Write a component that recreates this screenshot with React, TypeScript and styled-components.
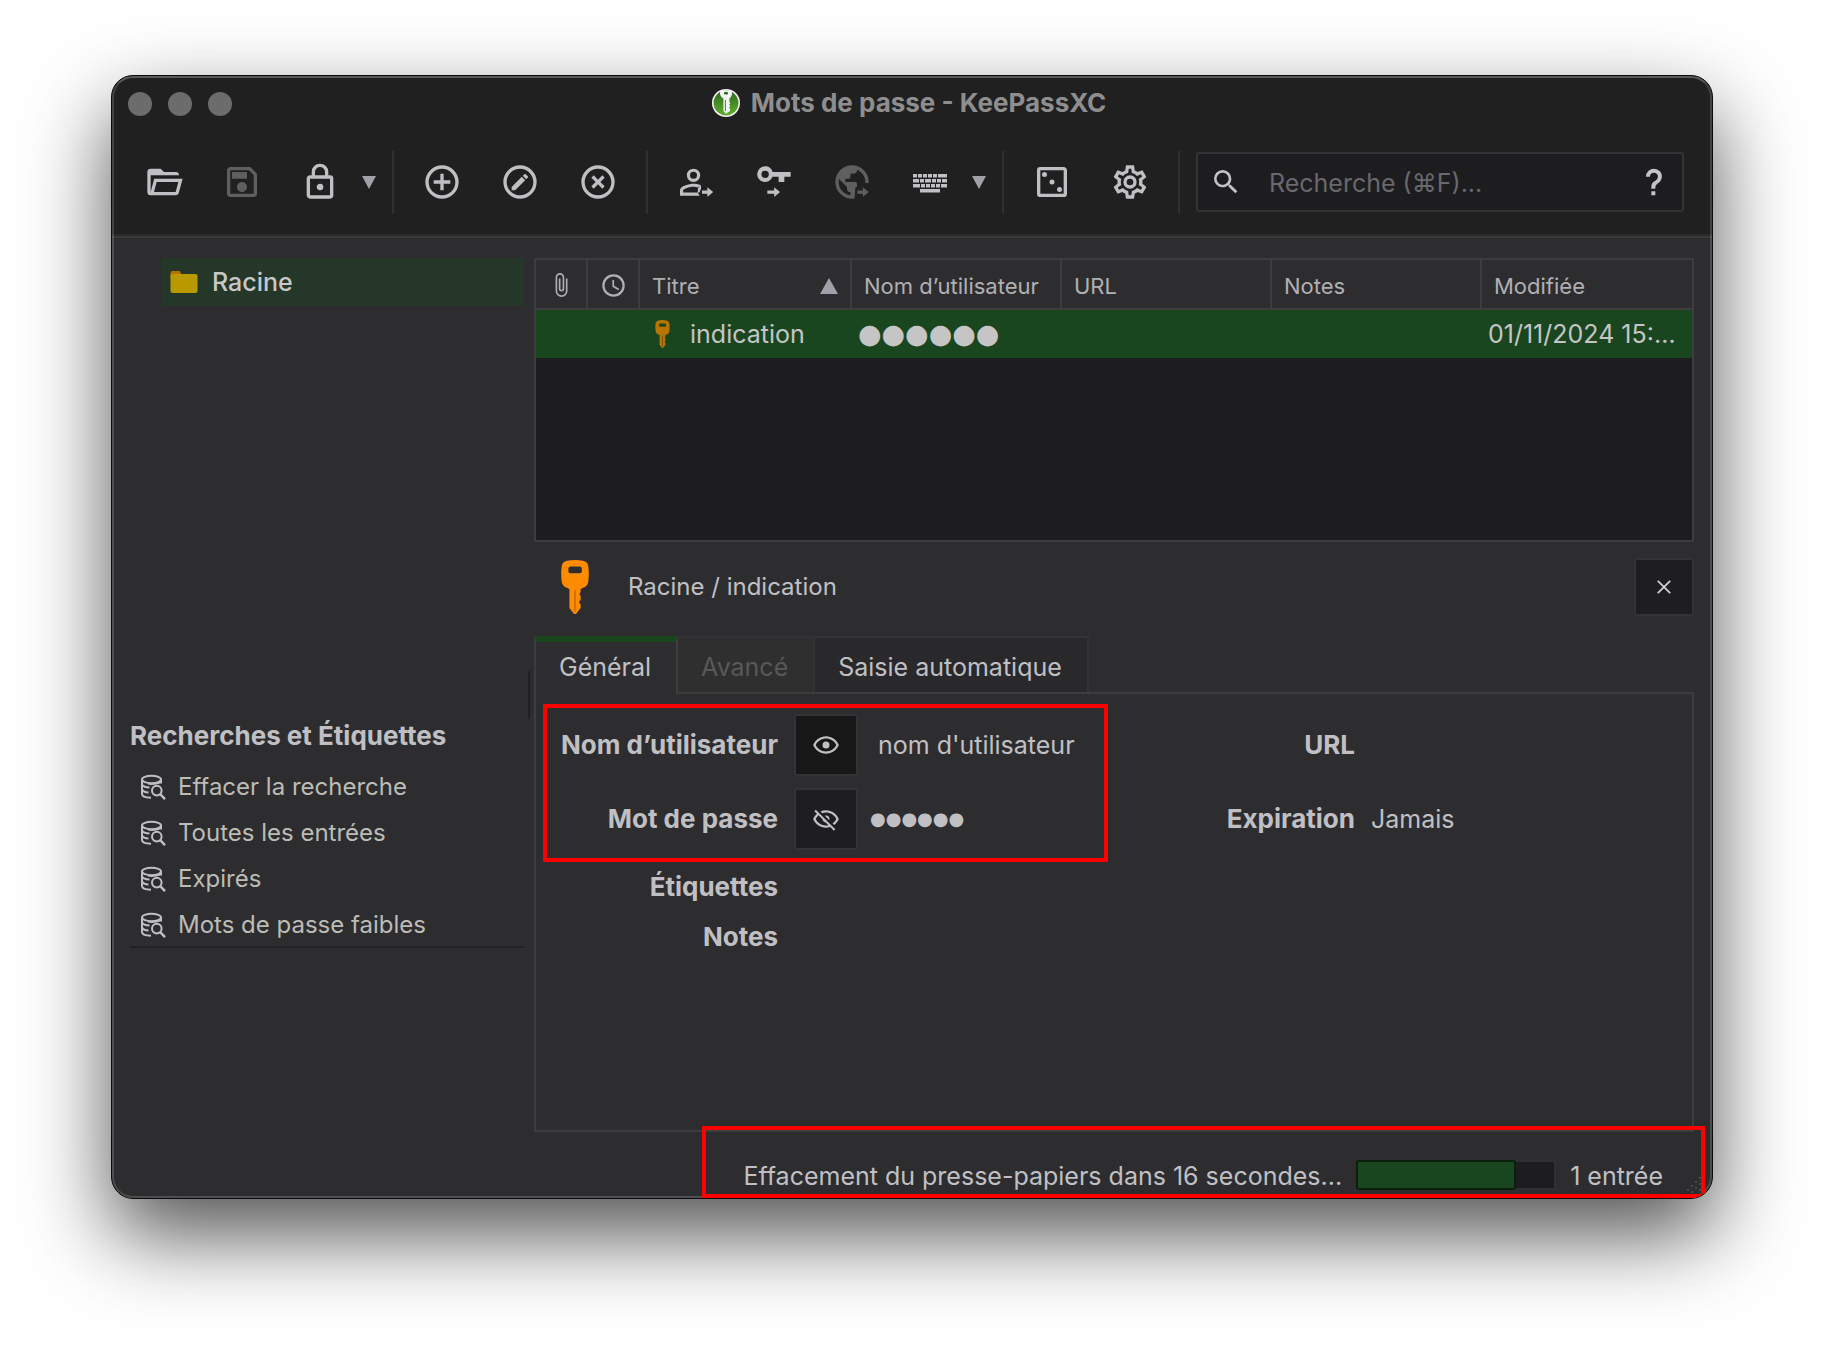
import React from "react";
import styled, { createGlobalStyle, css } from "styled-components";

const GlobalStyle = createGlobalStyle`
  *, *::before, *::after { box-sizing: border-box; }
  body {
    margin: 0;
    background: #ffffff;
    font-family: Inter, "Liberation Sans", "DejaVu Sans", sans-serif;
    font-size: 25px;
    line-height: 32px;
    color: #c0c0c4;
  }
  button, input { font: inherit; color: inherit; margin: 0; }
  button { border: 0; padding: 0; background: none; }
`;

const line = "#3d3d3f";
const selection = "#1a461f";

const Page = styled.div`
  display: flex;
  min-height: 100vh;
  padding: 75px 111px 147px;
`;

const Window = styled.div`
  position: relative;
  flex: 1;
  min-width: 0;
  display: flex;
  flex-direction: column;
  overflow: hidden;
  border: 1px solid #0a0a0a;
  border-radius: 22px;
  background: #2d2d2f;
  &::after {
    content: "";
    position: absolute;
    inset: 0;
    border: 2px solid rgba(255, 255, 255, 0.16);
    border-top-color: rgba(255, 255, 255, 0.26);
    border-radius: 21px;
    pointer-events: none;
  }
`;

const Shadow = styled.div`
  flex: 1;
  min-width: 0;
  display: flex;
  border-radius: 22px;
  box-shadow: 0 36px 84px rgba(0, 0, 0, 0.68);
`;

const Chrome = styled.header`
  background: #202020;
  border-bottom: 2px solid #3a3a3c;
  box-shadow: inset 0 -2px 0 #2a2a2b;
`;

const TitleBar = styled.div`
  display: grid;
  grid-template-columns: 1fr auto 1fr;
  align-items: center;
  height: 56px;
  padding: 0 16px;
`;

const Lights = styled.div`
  display: flex;
  gap: 16px;
`;

const Light = styled.button`
  width: 24px;
  height: 24px;
  border-radius: 50%;
  background: #6c6c6c;
`;

const Title = styled.h1`
  display: flex;
  align-items: center;
  gap: 11px;
  margin: 0;
  padding: 0 6px 2px 0;
  font-size: 26px;
  line-height: 32px;
  font-weight: 700;
  color: #8e8e8e;
`;

const Toolbar = styled.div`
  display: flex;
  align-items: center;
  height: 104px;
  padding: 0 28px 4px 13px;
`;

const ToolButton = styled.button`
  display: grid;
  place-items: center;
  flex: 0 0 78px;
  height: 60px;
  color: #c0c0c4;
  &:disabled { color: #5f5f5f; }
`;

const MenuButton = styled.button`
  flex: 0 0 24px;
  display: grid;
  height: 60px;
  padding-right: 4px;
  place-items: center;
  color: #a0a0a8;
`;

const Separator = styled.span`
  flex: 0 0 2px;
  height: 62px;
  margin: 0 9px;
  background: #303032;
`;

const Search = styled.div`
  flex: 1;
  min-width: 0;
  display: flex;
  align-items: center;
  height: 60px;
  margin-left: 7px;
  padding: 0 12px;
  border: 2px solid #333336;
  border-radius: 3px;
  background: #1d1d1f;
  color: #c4c4c6;
`;

const SearchInput = styled.input`
  flex: 1;
  min-width: 0;
  height: 54px;
  padding: 2px 0 0 27px;
  border: 0;
  outline: 0;
  background: transparent;
  &::placeholder { color: #68686d; opacity: 1; }
`;

const IconButton = styled.button`
  display: grid;
  place-items: center;
`;

const Body = styled.div`
  flex: 1;
  display: flex;
  padding: 20px 18px 0;
`;

const Sidebar = styled.aside`
  flex: 0 0 394px;
  display: flex;
  flex-direction: column;
  padding-bottom: 184px;
`;

const Tree = styled.div`
  flex: 1;
  padding-left: 32px;
`;

const TreeItem = styled.button`
  display: flex;
  align-items: center;
  gap: 14px;
  width: 100%;
  height: 48px;
  padding: 0 8px;
  background: #253729;
  font-weight: 500;
  color: #c8c8c8;
`;

const Tags = styled.section`
  border-bottom: 2px solid #222223;
`;

const TagsTitle = styled.h2`
  margin: 0;
  padding-bottom: 10px;
  font-size: 26px;
  line-height: 32px;
  font-weight: 700;
`;

const TagItem = styled.button`
  display: flex;
  align-items: center;
  gap: 12px;
  width: 100%;
  height: 46px;
  padding: 3px 0 0 10px;
  font-size: 24px;
  color: #bcbcb6;
`;

const Splitter = styled.div`
  display: flex;
  align-items: center;
  flex: 0 0 10px;
  padding-left: 4px;
  &::before {
    content: "";
    width: 2px;
    height: 48px;
    background: #202021;
  }
`;

const Main = styled.main`
  flex: 1;
  min-width: 0;
  display: flex;
  flex-direction: column;
`;

const TableFrame = styled.div`
  min-height: 284px;
  border: 2px solid ${line};
  background: #1d1d1f;
`;

const Table = styled.table`
  width: 100%;
  table-layout: fixed;
  border-collapse: separate;
  border-spacing: 0;
`;

const Col = styled.col<{ $w?: number }>`
  ${(p) => p.$w && css`width: ${p.$w}px;`}
`;

const Th = styled.th<{ $icon?: boolean }>`
  height: 50px;
  padding: ${(p) => (p.$icon ? "2px 0 0" : "3px 12px 0")};
  border-bottom: 2px solid ${line};
  border-right: 2px solid ${line};
  background: #2d2d2f;
  font-size: 22px;
  font-weight: 400;
  text-align: left;
  white-space: nowrap;
  color: #b0b0b4;
  &:last-child { border-right: 0; }
`;

const HeadCell = styled.div<{ $center?: boolean }>`
  display: flex;
  align-items: center;
  justify-content: ${(p) => (p.$center ? "center" : "space-between")};
`;

const Td = styled.td`
  height: 48px;
  padding: 0 6px;
  overflow: hidden;
  text-overflow: ellipsis;
  white-space: nowrap;
  background: ${selection};
  color: #c5c5c5;
`;

const EntryName = styled.div`
  display: flex;
  align-items: center;
  gap: 20px;
  padding-left: 9px;
`;

const Dots = styled.span<{ $size: number }>`
  font-family: "DejaVu Sans", sans-serif;
  font-size: ${(p) => p.$size}px;
  line-height: 32px;
`;

const PreviewHead = styled.div`
  display: flex;
  align-items: center;
  height: 58px;
  margin: 16px 0 20px;
  padding-left: 27px;
`;

const Path = styled.h2`
  flex: 1;
  margin: 0;
  padding-left: 39px;
  font-size: 24px;
  line-height: 32px;
  font-weight: 400;
`;

const SquareButton = styled.button<{ $size: number; $pressed?: boolean }>`
  flex: none;
  display: grid;
  place-items: center;
  width: ${(p) => p.$size + 2}px;
  height: ${(p) => p.$size}px;
  border: 2px solid #333335;
  border-radius: 3px;
  background: ${(p) => (p.$pressed ? "#171717" : "#1e1e20")};
`;

const Tabs = styled.div`
  position: relative;
  display: flex;
  height: 58px;
  margin-bottom: -2px;
`;

const Tab = styled.button`
  height: 56px;
  padding: 4px 25px 0 23px;
  border: 2px solid #333335;
  border-width: 2px 2px 0 0;
  background: #29292b;
  &[aria-selected="true"] {
    height: 58px;
    padding: 0 25px 2px 23px;
    border-top: 6px solid ${selection};
    border-left: 2px solid ${line};
    border-right-color: ${line};
    background: #2d2d2f;
  }
  &:disabled { background: #2f2f2f; color: #585858; }
`;

const Panel = styled.div`
  flex: 1;
  display: flex;
  align-items: flex-start;
  padding: 20px 0 0 22px;
  border: 2px solid ${line};
`;

const Fields = styled.dl`
  position: relative;
  flex: 1;
  margin: 0;
`;

const Field = styled.div<{ $label: number; $short?: boolean }>`
  display: grid;
  grid-template-columns: ${(p) => p.$label}px 1fr;
  column-gap: 16px;
  align-items: center;
  height: ${(p) => (p.$short ? 50 : 62)}px;
  margin-bottom: ${(p) => (p.$short ? 0 : 12)}px;
`;

const Label = styled.dt`
  font-size: 26px;
  font-weight: 700;
  text-align: right;
  white-space: nowrap;
`;

const Value = styled.dd<{ $gap?: number }>`
  display: flex;
  align-items: center;
  gap: ${(p) => p.$gap ?? 0}px;
  margin: 0;
`;

const Highlight = styled.div`
  position: absolute;
  z-index: 1;
  border: 4px solid #ff0000;
  pointer-events: none;
`;

const FieldsHighlight = styled(Highlight)`
  top: -10px;
  left: -15px;
  right: 17px;
  height: 158px;
`;

const StatusHighlight = styled(Highlight)`
  top: -6px;
  left: 590px;
  right: 7px;
  bottom: 0;
`;

const StatusBar = styled.footer`
  position: relative;
  display: flex;
  align-items: center;
  justify-content: flex-end;
  height: 66px;
  padding: 22px 49px 0 0;
`;

const Progress = styled.progress`
  appearance: none;
  width: 200px;
  height: 30px;
  margin: 0 14px 2px;
  border: 0;
  background: #1d1d1f;
  &::-webkit-progress-bar {
    height: 30px;
    background: #1d1d1f;
    box-shadow: inset 0 0 0 2px #303032;
  }
  &::-webkit-progress-value {
    border: 2px solid #0b1f0d;
    border-radius: 3px;
    background: ${selection};
  }
`;

const Grip = styled.svg`
  position: absolute;
  right: 3px;
  bottom: 3px;
`;

const paths = {
  open: "M6.1,10L4,18V8H21A2,2 0 0,0 19,6H12L10,4H4A2,2 0 0,0 2,6V18A2,2 0 0,0 4,20H19C19.9,20 20.7,19.4 20.9,18.5L23.2,10H6.1M19,18H6L7.6,12H20.6L19,18Z",
  save: "M17 3H5C3.89 3 3 3.9 3 5V19C3 20.1 3.89 21 5 21H19C20.1 21 21 20.1 21 19V7L17 3M19 19H5V5H16.17L19 7.83V19M12 12C10.34 12 9 13.34 9 15S10.34 18 12 18 15 16.66 15 15 13.66 12 12 12M6 6H15V10H6V6Z",
  lock: "M12,17C10.89,17 10,16.1 10,15C10,13.89 10.89,13 12,13A2,2 0 0,1 14,15A2,2 0 0,1 12,17M18,20V10H6V20H18M18,8A2,2 0 0,1 20,10V20A2,2 0 0,1 18,22H6C4.89,22 4,21.1 4,20V10C4,8.89 4.89,8 6,8H7V6A5,5 0 0,1 12,1A5,5 0 0,1 17,6V8H18M12,3A3,3 0 0,0 9,6V8H15V6A3,3 0 0,0 12,3Z",
  add: "M12,20C7.59,20 4,16.41 4,12C4,7.59 7.59,4 12,4C16.41,4 20,7.59 20,12C20,16.41 16.41,20 12,20M12,2A10,10 0 0,0 2,12A10,10 0 0,0 12,22A10,10 0 0,0 22,12A10,10 0 0,0 12,2M13,7H11V11H7V13H11V17H13V13H17V11H13V7Z",
  edit: "M12,20C7.59,20 4,16.41 4,12C4,7.59 7.59,4 12,4C16.41,4 20,7.59 20,12C20,16.41 16.41,20 12,20M12,2A10,10 0 0,0 2,12A10,10 0 0,0 12,22A10,10 0 0,0 22,12A10,10 0 0,0 12,2M16.7,9.35C16.92,9.14 16.92,8.79 16.7,8.58L15.42,7.3C15.21,7.08 14.86,7.08 14.65,7.3L13.65,8.3L15.7,10.35L16.7,9.35M7,14.94V17H9.06L15.12,10.94L13.06,8.88L7,14.94Z",
  remove: "M12,20C7.59,20 4,16.41 4,12C4,7.59 7.59,4 12,4C16.41,4 20,7.59 20,12C20,16.41 16.41,20 12,20M12,2A10,10 0 0,0 2,12A10,10 0 0,0 12,22A10,10 0 0,0 22,12A10,10 0 0,0 12,2M14.59,8L12,10.59L9.41,8L8,9.41L10.59,12L8,14.59L9.41,16L12,13.41L14.59,16L16,14.59L13.41,12L16,9.41L14.59,8Z",
  user: "M10.5,4A4,4 0 0,0 6.5,8A4,4 0 0,0 10.5,12A4,4 0 0,0 14.5,8A4,4 0 0,0 10.5,4M10.5,5.9A2.1,2.1 0 0,1 12.6,8A2.1,2.1 0 0,1 10.5,10.1A2.1,2.1 0 0,1 8.4,8A2.1,2.1 0 0,1 10.5,5.9M10.5,13C7.8,13 2.4,14.3 2.4,17V20.2H14.2V18.3H4.3V17C4.3,16.4 7.5,14.9 10.5,14.9C11.5,14.9 12.6,15.1 13.5,15.4L14.8,13.8C13.3,13.3 11.7,13 10.5,13M14.2,20.2L13,18.3L13.3,15L15,14V16L14.2,18ZM15.6,17.1V19H18.8V21L22.3,18L18.8,15.2V17.1Z",
  key: "M6.7,2.6A4.7,4.7 0 1,0 11.1,8.8H14.8V12H18.2V8.8H22V6H11.2A4.7,4.7 0 0,0 6.7,2.6M6.7,5.2A2.2,2.2 0 1,1 6.7,9.6A2.2,2.2 0 1,1 6.7,5.2M8,17.1V19H12.1V21L15.6,18L12.1,15.2V17.1Z",
  dice: "M19,5V19H5V5H19M19,3H5A2,2 0 0,0 3,5V19A2,2 0 0,0 5,21H19A2,2 0 0,0 21,19V5C21,3.89 20.1,3 19,3M12,10.5A1.5,1.5 0 0,0 10.5,12A1.5,1.5 0 0,0 12,13.5A1.5,1.5 0 0,0 13.5,12A1.5,1.5 0 0,0 12,10.5M16.5,15A1.5,1.5 0 0,0 15,16.5A1.5,1.5 0 0,0 16.5,18A1.5,1.5 0 0,0 18,16.5A1.5,1.5 0 0,0 16.5,15M7.5,6A1.5,1.5 0 0,0 6,7.5A1.5,1.5 0 0,0 7.5,9A1.5,1.5 0 0,0 9,7.5A1.5,1.5 0 0,0 7.5,6Z",
  settings: "M12,8A4,4 0 0,1 16,12A4,4 0 0,1 12,16A4,4 0 0,1 8,12A4,4 0 0,1 12,8M12,10A2,2 0 0,0 10,12A2,2 0 0,0 12,14A2,2 0 0,0 14,12A2,2 0 0,0 12,10M10,22C9.75,22 9.54,21.82 9.5,21.58L9.13,18.93C8.5,18.68 7.96,18.34 7.44,17.94L4.95,18.95C4.73,19.03 4.46,18.95 4.34,18.73L2.34,15.27C2.21,15.05 2.27,14.78 2.46,14.63L4.57,12.97L4.5,12L4.57,11L2.46,9.37C2.27,9.22 2.21,8.95 2.34,8.73L4.34,5.27C4.46,5.05 4.73,4.96 4.95,5.05L7.44,6.05C7.96,5.66 8.5,5.32 9.13,5.07L9.5,2.42C9.54,2.18 9.75,2 10,2H14C14.25,2 14.46,2.18 14.5,2.42L14.87,5.07C15.5,5.32 16.04,5.66 16.56,6.05L19.05,5.05C19.27,4.96 19.54,5.05 19.66,5.27L21.66,8.73C21.79,8.95 21.73,9.22 21.54,9.37L19.43,11L19.5,12L19.43,13L21.54,14.63C21.73,14.78 21.79,15.05 21.66,15.27L19.66,18.73C19.54,18.95 19.27,19.04 19.05,18.95L16.56,17.95C16.04,18.34 15.5,18.68 14.87,18.93L14.5,21.58C14.46,21.82 14.25,22 14,22H10M11.25,4L10.88,6.61C9.68,6.86 8.62,7.5 7.85,8.39L5.44,7.35L4.69,8.65L6.8,10.2C6.4,11.37 6.4,12.64 6.8,13.8L4.68,15.36L5.43,16.66L7.86,15.62C8.63,16.5 9.68,17.14 10.87,17.38L11.24,20H12.76L13.13,17.39C14.32,17.14 15.37,16.5 16.14,15.62L18.57,16.66L19.32,15.36L17.2,13.81C17.6,12.64 17.6,11.37 17.2,10.2L19.31,8.65L18.56,7.35L16.15,8.39C15.38,7.5 14.32,6.86 13.12,6.62L12.75,4H11.25Z",
  search: "M9.5,3A6.5,6.5 0 0,1 16,9.5C16,11.11 15.41,12.59 14.44,13.73L14.71,14H15.5L20.5,19L19,20.5L14,15.5V14.71L13.73,14.44C12.59,15.41 11.11,16 9.5,16A6.5,6.5 0 0,1 3,9.5A6.5,6.5 0 0,1 9.5,3M9.5,5C7,5 5,7 5,9.5C5,12 7,14 9.5,14C12,14 14,12 14,9.5C14,7 12,5 9.5,5Z",
  help: "M10,19H13V22H10V19M12,2C17.35,2.22 19.68,7.62 16.5,11.67C15.67,12.67 14.33,13.33 13.67,14.17C13,15 13,16 13,17H10C10,15.33 10,13.92 10.67,12.92C11.33,11.92 12.67,11.33 13.5,10.67C15.92,8.43 15.32,5.26 12,5A3,3 0 0,0 9,8H6A6,6 0 0,1 12,2Z",
  clip: "M16.5,6V17.5A4,4 0 0,1 12.5,21.5A4,4 0 0,1 8.5,17.5V5A2.5,2.5 0 0,1 11,2.5A2.5,2.5 0 0,1 13.5,5V15.5A1,1 0 0,1 12.5,16.5A1,1 0 0,1 11.5,15.5V6H10V15.5A2.5,2.5 0 0,0 12.5,18A2.5,2.5 0 0,0 15,15.5V5A4,4 0 0,0 11,1A4,4 0 0,0 7,5V17.5A5.5,5.5 0 0,0 12.5,23A5.5,5.5 0 0,0 18,17.5V6H16.5Z",
  clock: "M12,20A8,8 0 0,0 20,12A8,8 0 0,0 12,4A8,8 0 0,0 4,12A8,8 0 0,0 12,20M12,2A10,10 0 0,1 22,12A10,10 0 0,1 12,22C6.47,22 2,17.5 2,12A10,10 0 0,1 12,2M12.5,7V12.25L17,14.92L16.25,16.15L11,13V7H12.5Z",
  eye: "M12,9A3,3 0 0,1 15,12A3,3 0 0,1 12,15A3,3 0 0,1 9,12A3,3 0 0,1 12,9M12,4.5C17,4.5 21.27,7.61 23,12C21.27,16.39 17,19.5 12,19.5C7,19.5 2.73,16.39 1,12C2.73,7.61 7,4.5 12,4.5M3.18,12C4.83,15.36 8.24,17.5 12,17.5C15.76,17.5 19.17,15.36 20.82,12C19.17,8.64 15.76,6.5 12,6.5C8.24,6.5 4.83,8.64 3.18,12Z",
  eyeOff: "M2,5.27L3.28,4L20,20.72L18.73,22L15.65,18.92C14.5,19.3 13.28,19.5 12,19.5C7,19.5 2.73,16.39 1,12C1.69,10.24 2.79,8.69 4.19,7.46L2,5.27M12,9A3,3 0 0,1 15,12C15,12.35 14.94,12.69 14.83,13L11,9.17C11.31,9.06 11.65,9 12,9M12,4.5C17,4.5 21.27,7.61 23,12C22.18,14.08 20.79,15.88 19,17.19L17.58,15.76C18.94,14.82 20.06,13.54 20.82,12C19.17,8.64 15.76,6.5 12,6.5C10.91,6.5 9.84,6.68 8.84,7L7.3,5.47C8.74,4.85 10.33,4.5 12,4.5M3.18,12C4.83,15.36 8.24,17.5 12,17.5C12.69,17.5 13.37,17.43 14,17.29L11.72,15C10.29,14.85 9.15,13.71 9,12.28L5.6,8.87C4.61,9.72 3.78,10.78 3.18,12Z",
};

const Icon = ({ name, size = 40 }: { name: keyof typeof paths; size?: number }) => (
  <svg width={size} height={size} viewBox="0 0 24 24" fill="currentColor" fillRule="evenodd" aria-hidden="true">
    <path d={paths[name]} />
  </svg>
);

const GlobeIcon = () => (
  <svg width="40" height="40" viewBox="0 0 24 24" fill="currentColor" aria-hidden="true">
    <clipPath id="globe-cut">
      <path d="M0 0H24V12.6H18.6L14 15.5L13.4 24H0Z" />
    </clipPath>
    <path
      clipPath="url(#globe-cut)"
      fillRule="evenodd"
      d="M17.9,17.39C17.64,16.59 16.89,16 16,16H15V13A1,1 0 0,0 14,12H8V10H10A1,1 0 0,0 11,9V7H13A2,2 0 0,0 15,5V4.59C17.93,5.77 20,8.64 20,12C20,14.08 19.2,15.97 17.9,17.39M11,19.93C7.05,19.44 4,16.08 4,12C4,11.38 4.08,10.78 4.21,10.21L9,15V16A2,2 0 0,0 11,18M12,2A10,10 0 0,0 2,12A10,10 0 0,0 12,22A10,10 0 0,0 22,12A10,10 0 0,0 12,2Z"
    />
    <path d="M15.2,17.1V19H18.5V21L22,18L18.5,15.2V17.1Z" />
  </svg>
);

const keyRows: [number, number, number][] = [
  [3, 12, 4], [8, 12, 4], [13, 12, 4], [18, 12, 4], [23, 12, 4], [28, 12, 9],
  [3, 17, 6], [10, 17, 4], [15, 17, 6], [22, 17, 4], [27, 17, 4], [32, 17, 5],
  [3, 22, 7], [11, 22, 4], [16, 22, 4], [21, 22, 4], [26, 22, 4], [31, 22, 6],
  [10, 27, 20],
];

const KeyboardIcon = () => (
  <svg width="40" height="40" viewBox="0 0 40 40" fill="currentColor" aria-hidden="true">
    {keyRows.map(([x, y, w]) => (
      <rect key={`${x}-${y}`} x={x} y={y} width={w} height="3.5" />
    ))}
  </svg>
);

const Caret = ({ up }: { up?: boolean }) =>
  up ? (
    <svg width="18" height="16" viewBox="0 0 18 16" fill="#a0a0a8" aria-hidden="true"><path d="M9 0L18 16H0Z" /></svg>
  ) : (
    <svg width="14" height="13" viewBox="0 0 14 13" fill="currentColor" aria-hidden="true"><path d="M0 0H14L7 13Z" /></svg>
  );

const Logo = () => (
  <svg width="28" height="28" viewBox="0 0 28 28" aria-hidden="true">
    <defs>
      <linearGradient id="logo-green" x1="0" y1="0" x2="0" y2="1">
        <stop offset="0" stopColor="#2c6a20" />
        <stop offset="1" stopColor="#5fae2a" />
      </linearGradient>
    </defs>
    <circle cx="14" cy="14" r="14" fill="#f4f4f4" />
    <circle cx="14" cy="14" r="12.4" fill="url(#logo-green)" />
    <path fill="#f4f4f4" d="M8.6 1.5H19.4C20.8 4.4 20 7.6 17.4 9.4V13L18.4 14L17.2 15.5L18.2 17L17.2 18.5L18 20V22L14 24.8L11.4 22V9.4C8 7.6 7.2 4.4 8.6 1.5Z" />
    <rect x="12" y="3" width="4" height="2.6" rx="1" fill="#2c6a20" />
    <path d="M13.4 11V22" stroke="#3f8424" strokeWidth="1" />
  </svg>
);

const FolderIcon = () => (
  <svg width="28" height="24" viewBox="0 0 28 24" aria-hidden="true">
    <path d="M0.5 3Q0.5 1 2.5 1H9.5L12 4.5V8H0.5Z" fill="#b87000" />
    <rect x="0.5" y="4" width="27" height="19" rx="2" fill="#b89900" />
  </svg>
);

const KeyIcon = ({ width, height, color, shade, hole }: { width: number; height: number; color: string; shade: string; hole: string }) => (
  <svg width={width} height={height} viewBox="0 0 28 54" aria-hidden="true">
    <path
      fill={color}
      d="M6 0.8Q14 -0.6 22 0.8Q26.6 1.6 27.2 6Q28.4 14 27.2 22Q26.4 26.6 22 27.8L19.6 29V32L18.4 34L19.6 36V40L17.8 42L19.6 44.4V48L15.4 53.4Q14 54.4 12.6 53.4L8.4 48V29L6 27.8Q1.6 26.6 0.8 22Q-0.4 14 0.8 6Q1.4 1.6 6 0.8Z"
    />
    <path d="M14 30V52" stroke={shade} strokeWidth="2" />
    <rect x="7.4" y="6.6" width="13.4" height="6.6" rx="2" fill={hole} />
  </svg>
);

const TagIcon = () => (
  <svg width="26" height="26" viewBox="0 0 26 26" fill="none" stroke="#c0c0c4" strokeWidth="2" aria-hidden="true">
    <ellipse cx="11.5" cy="5.5" rx="9.5" ry="3.7" />
    <path d="M2 5.5V20C2 22.2 5.5 23.6 11 23.8M21 5.5V9.5M2 10.5C3 12.5 6 13.4 9.5 13.6M2 15.5C3 17.4 5.5 18.3 8.5 18.5M8 9.6C12 10.2 17 9.6 20.5 8.2" />
    <circle cx="16.8" cy="16.6" r="4.8" />
    <path d="M20.2 20.2L25 25.2" strokeWidth="2.4" />
  </svg>
);

const CloseIcon = () => (
  <svg width="14" height="14" viewBox="0 0 14 14" fill="none" stroke="#d0d0d0" strokeWidth="1.8" aria-hidden="true">
    <path d="M0.8 0.8L13.2 13.2M13.2 0.8L0.8 13.2" />
  </svg>
);

const tags = ["Effacer la recherche", "Toutes les entrées", "Expirés", "Mots de passe faibles"];

export default function App() {
  return (
    <>
      <GlobalStyle />
      <Page>
        <Shadow>
          <Window>
            <Chrome>
              <TitleBar>
                <Lights>
                  <Light aria-label="Fermer" />
                  <Light aria-label="Réduire" />
                  <Light aria-label="Agrandir" />
                </Lights>
                <Title><Logo />Mots de passe - KeePassXC</Title>
              </TitleBar>
              <Toolbar>
                <ToolButton aria-label="Ouvrir"><Icon name="open" /></ToolButton>
                <ToolButton aria-label="Enregistrer" disabled><Icon name="save" /></ToolButton>
                <ToolButton aria-label="Verrouiller"><Icon name="lock" /></ToolButton>
                <MenuButton aria-label="Options de verrouillage"><Caret /></MenuButton>
                <Separator />
                <ToolButton aria-label="Ajouter"><Icon name="add" /></ToolButton>
                <ToolButton aria-label="Modifier"><Icon name="edit" /></ToolButton>
                <ToolButton aria-label="Supprimer"><Icon name="remove" /></ToolButton>
                <Separator />
                <ToolButton aria-label="Copier le nom"><Icon name="user" /></ToolButton>
                <ToolButton aria-label="Copier le mot de passe"><Icon name="key" /></ToolButton>
                <ToolButton aria-label="Copier l’URL" disabled><GlobeIcon /></ToolButton>
                <ToolButton aria-label="Saisie"><KeyboardIcon /></ToolButton>
                <MenuButton aria-label="Options de saisie"><Caret /></MenuButton>
                <Separator />
                <ToolButton aria-label="Générateur"><Icon name="dice" /></ToolButton>
                <ToolButton aria-label="Paramètres"><Icon name="settings" /></ToolButton>
                <Separator />
                <Search>
                  <Icon name="search" size={32} />
                  <SearchInput aria-label="Recherche" placeholder="Recherche (⌘F)..." />
                  <IconButton aria-label="Aide"><Icon name="help" size={32} /></IconButton>
                </Search>
              </Toolbar>
            </Chrome>

            <Body>
              <Sidebar>
                <Tree>
                  <TreeItem><FolderIcon />Racine</TreeItem>
                </Tree>
                <Tags>
                  <TagsTitle>Recherches et Étiquettes</TagsTitle>
                  {tags.map((t) => (
                    <TagItem key={t}><TagIcon />{t}</TagItem>
                  ))}
                </Tags>
              </Sidebar>
              <Splitter />
              <Main>
                <TableFrame>
                  <Table>
                    <colgroup>
                      <Col $w={52} />
                      <Col $w={52} />
                      <Col $w={212} />
                      <Col />
                      <Col />
                      <Col />
                      <Col />
                    </colgroup>
                    <thead>
                      <tr>
                        <Th $icon aria-label="Pièces jointes"><HeadCell $center><Icon name="clip" size={26} /></HeadCell></Th>
                        <Th $icon aria-label="Code"><HeadCell $center><Icon name="clock" size={27} /></HeadCell></Th>
                        <Th><HeadCell>Titre<Caret up /></HeadCell></Th>
                        <Th>Nom d’utilisateur</Th>
                        <Th>URL</Th>
                        <Th>Notes</Th>
                        <Th>Modifiée</Th>
                      </tr>
                    </thead>
                    <tbody>
                      <tr>
                        <Td />
                        <Td />
                        <Td>
                          <EntryName>
                            <KeyIcon width={15} height={28} color="#b87400" shade="#7a5a10" hole={selection} />
                            indication
                          </EntryName>
                        </Td>
                        <Td><Dots $size={27}>●●●●●●</Dots></Td>
                        <Td />
                        <Td />
                        <Td>01/11/2024 15:…</Td>
                      </tr>
                    </tbody>
                  </Table>
                </TableFrame>

                <PreviewHead>
                  <KeyIcon width={28} height={54} color="#ff8c00" shade="#d97000" hole="#2d2d2f" />
                  <Path>Racine / indication</Path>
                  <SquareButton $size={58} aria-label="Fermer l’aperçu"><CloseIcon /></SquareButton>
                </PreviewHead>

                <Tabs role="tablist">
                  <Tab role="tab" aria-selected="true">Général</Tab>
                  <Tab role="tab" disabled>Avancé</Tab>
                  <Tab role="tab">Saisie automatique</Tab>
                </Tabs>
                <Panel>
                  <Fields>
                    <Field $label={220}>
                      <Label>Nom d’utilisateur</Label>
                      <Value $gap={20}>
                        <SquareButton $size={62} $pressed aria-label="Masquer le nom"><Icon name="eye" size={28} /></SquareButton>
                        nom d'utilisateur
                      </Value>
                    </Field>
                    <Field $label={220}>
                      <Label>Mot de passe</Label>
                      <Value $gap={12}>
                        <SquareButton $size={62} aria-label="Afficher le mot de passe"><Icon name="eyeOff" size={28} /></SquareButton>
                        <Dots $size={18}>●●●●●●</Dots>
                      </Value>
                    </Field>
                    <Field $label={220} $short><Label>Étiquettes</Label><Value /></Field>
                    <Field $label={220} $short><Label>Notes</Label><Value /></Field>
                    <FieldsHighlight />
                  </Fields>
                  <Fields>
                    <Field $label={230}><Label>URL</Label><Value /></Field>
                    <Field $label={230}><Label>Expiration</Label><Value>Jamais</Value></Field>
                  </Fields>
                </Panel>
              </Main>
            </Body>

            <StatusBar>
              <span>Effacement du presse-papiers dans 16 secondes...</span>
              <Progress value={80} max={100} aria-label="Délai restant" />
              <span>1 entrée</span>
              <Grip width="24" height="24" viewBox="0 0 24 24" fill="#4a4a4c" aria-hidden="true">
                <path d="M18 2h2v2h-2zM14 6h2v2h-2zM18 8h2v2h-2zM10 10h2v2h-2zM14 12h2v2h-2zM6 14h2v2H6zM18 14h2v2h-2zM10 16h2v2h-2zM2 18h2v2H2zM14 18h2v2h-2zM6 20h2v2H6z" />
              </Grip>
              <StatusHighlight />
            </StatusBar>
          </Window>
        </Shadow>
      </Page>
    </>
  );
}
